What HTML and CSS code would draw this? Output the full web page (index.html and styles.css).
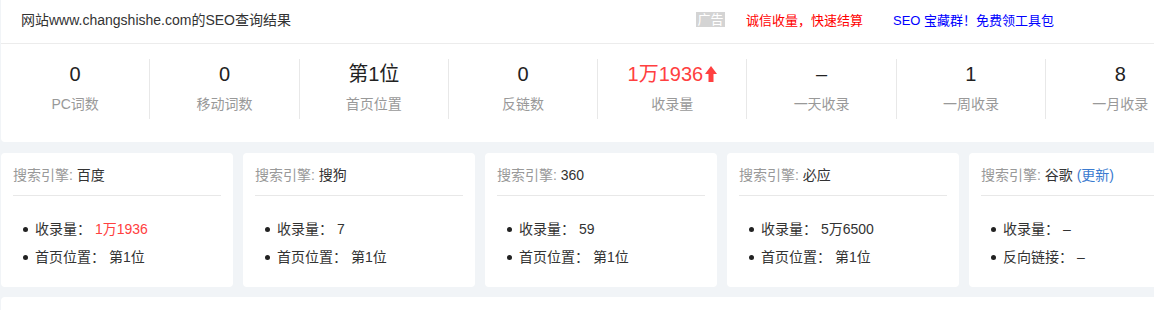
FILE: index.html
```html
<!DOCTYPE html>
<html lang="zh-CN">
<head>
<meta charset="utf-8">
<title>SEO查询结果</title>
<link rel="stylesheet" href="styles.css">
</head>
<body>
<div class="wrap">
  <section class="panel">
    <header class="head">
      <div class="title">网站www.changshishe.com的SEO查询结果</div>
      <div class="ads">
        <span class="ad-tag">广告</span>
        <a class="ad ad-red">诚信收量，快速结算</a>
        <a class="ad ad-blue">SEO 宝藏群！免费领工具包</a>
      </div>
    </header>
    <div class="stats">
      <div class="stat"><div class="num">0</div><div class="lbl">PC词数</div></div>
      <div class="stat"><div class="num">0</div><div class="lbl">移动词数</div></div>
      <div class="stat"><div class="num">第1位</div><div class="lbl">首页位置</div></div>
      <div class="stat"><div class="num">0</div><div class="lbl">反链数</div></div>
      <div class="stat"><div class="num red">1万1936<svg class="up" width="12" height="16" viewBox="0 0 12 16"><path d="M6 0 L12 8 L8.5 8 L8.5 16 L3.5 16 L3.5 8 L0 8 Z" fill="#ff4040"/></svg></div><div class="lbl">收录量</div></div>
      <div class="stat"><div class="num">–</div><div class="lbl">一天收录</div></div>
      <div class="stat"><div class="num">1</div><div class="lbl">一周收录</div></div>
      <div class="stat"><div class="num">8</div><div class="lbl">一月收录</div></div>
    </div>
  </section>

  <section class="cards">
    <div class="card">
      <div class="card-title"><span class="muted">搜索引擎:</span> 百度</div>
      <ul class="items">
        <li>收录量： <span class="red">1万1936</span></li>
        <li>首页位置： 第1位</li>
      </ul>
    </div>
    <div class="card">
      <div class="card-title"><span class="muted">搜索引擎:</span> 搜狗</div>
      <ul class="items">
        <li>收录量： 7</li>
        <li>首页位置： 第1位</li>
      </ul>
    </div>
    <div class="card">
      <div class="card-title"><span class="muted">搜索引擎:</span> 360</div>
      <ul class="items">
        <li>收录量： 59</li>
        <li>首页位置： 第1位</li>
      </ul>
    </div>
    <div class="card">
      <div class="card-title"><span class="muted">搜索引擎:</span> 必应</div>
      <ul class="items">
        <li>收录量： 5万6500</li>
        <li>首页位置： 第1位</li>
      </ul>
    </div>
    <div class="card">
      <div class="card-title"><span class="muted">搜索引擎:</span> 谷歌 <a class="link">(更新)</a></div>
      <ul class="items">
        <li>收录量： –</li>
        <li>反向链接： –</li>
      </ul>
    </div>
  </section>

  <section class="panel panel-bottom"></section>
</div>
</body>
</html>
```

FILE: styles.css
```css
html, body {
  margin: 0;
  padding: 0;
  overflow: hidden;
}
body {
  background: #f1f4f7;
  font-family: "Liberation Sans", "Noto Sans CJK SC", sans-serif;
  color: #333;
  font-size: 14px;
}
.wrap {
  width: 1200px;
  margin-left: 1px;
}
.panel {
  background: #fff;
  border-radius: 0 0 4px 4px;
}
.head {
  height: 43px;
  border-bottom: 1px solid #ececec;
  display: flex;
  align-items: center;
  padding-left: 20px;
}
.title {
  width: 675px;
  font-size: 14px;
  color: #333;
  line-height: 20px;
  margin-top: -4px;
}
.ads {
  display: flex;
  align-items: center;
  font-size: 13px;
  margin-top: -4px;
}
.ad-tag {
  background: #d4d4d4;
  color: #fff;
  padding: 0 1.5px;
  line-height: 15px;
  margin-right: 21px;
}
.ad-red {
  color: #f00;
  margin-right: 30px;
}
.ad-blue {
  color: #00f;
}
.stats {
  display: grid;
  grid-template-columns: 148.3px repeat(7, 149.3px);
  padding: 15px 0 23px;
}
.stat {
  text-align: center;
  border-left: 1px solid #e8e8e8;
  height: 60px;
}
.stat:first-child {
  border-left: 0;
}
.num {
  font-size: 20px;
  line-height: 30px;
  color: #222;
}
.num.red {
  color: #ff4040;
}
.up {
  vertical-align: -1px;
  margin-left: 2px;
}
.lbl {
  font-size: 14px;
  line-height: 30px;
  color: #999;
}
.cards {
  display: flex;
  gap: 10px;
  margin-top: 11px;
}
.card {
  width: 232px;
  flex: none;
  background: #fff;
  border-radius: 4px;
  padding: 12px 12px 16px;
  box-sizing: border-box;
}
.card-title {
  line-height: 20px;
  padding-bottom: 10px;
  border-bottom: 1px solid #e8e8e8;
  color: #333;
}
.muted {
  color: #999;
}
.link {
  color: #3b7bd0;
}
.items {
  list-style: none;
  margin: 19px 0 0;
  padding: 0;
}
.items li {
  display: flex;
  align-items: center;
  line-height: 28px;
  white-space: pre;
}
.items li::before {
  content: "";
  width: 5px;
  height: 5px;
  border-radius: 50%;
  background: #222;
  margin-left: 10px;
  margin-right: 7px;
  flex: none;
}
.red {
  color: #ff4040;
}
.panel-bottom {
  margin-top: 10px;
  height: 13px;
  border-radius: 4px 4px 0 0;
}
```
